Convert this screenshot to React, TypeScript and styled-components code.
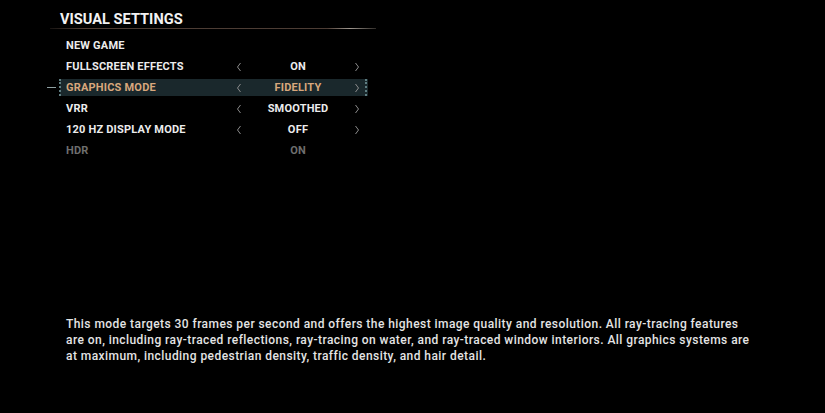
import React from "react";
import styled, { createGlobalStyle } from "styled-components";

const Global = createGlobalStyle`
  html, body { margin: 0; padding: 0; background: #000; }
  body { width: 825px; height: 413px; overflow: hidden; }
`;

const Screen = styled.div`
  width: 825px;
  height: 413px;
  background: #000;
  display: flex;
  flex-direction: column;
  justify-content: space-between;
  box-sizing: border-box;
  padding: 10px 0 49px 0;
`;

const Panel = styled.div`
  width: 326px;
  margin-left: 50px;
  display: flex;
  flex-direction: column;
`;

const Title = styled.h1`
  margin: 0 0 0 10px;
  font-family: Roboto, "Liberation Sans", sans-serif;
  font-weight: 700;
  font-size: 14.6px;
  line-height: 18px;
  color: #f2f2f2;
  letter-spacing: 0;
`;

const Divider = styled.div`
  height: 1px;
  background: linear-gradient(
    90deg,
    rgba(120, 100, 90, 0.2) 0%,
    rgba(140, 110, 95, 0.55) 10%,
    rgba(140, 110, 95, 0.55) 85%,
    rgba(200, 190, 180, 0.8) 92%,
    rgba(120, 110, 100, 0.4) 100%
  );
`;

const List = styled.div`
  display: flex;
  flex-direction: column;
  margin-top: 6px;
`;

const Row = styled.div<{ $active?: boolean }>`
  position: relative;
  display: grid;
  grid-template-columns: 170px 6px 112px 6px;
  align-items: center;
  height: 17px;
  margin: 2px 0 2px 10px;
  width: 308px;
  padding-left: 6px;
  box-sizing: border-box;
  background: ${(p) => (p.$active ? "#1a282c" : "transparent")};
  color: ${(p) => (p.$active ? "#d8a77c" : "#ececec")};
`;

const Label = styled.span<{ $dim?: boolean }>`
  font-family: Roboto, "Liberation Sans", sans-serif;
  font-weight: 700;
  font-size: 11px;
  letter-spacing: 0.2px;
  color: ${(p) => (p.$dim ? "#6e6e6e" : "inherit")};
  white-space: nowrap;
`;

const Value = styled.span<{ $dim?: boolean }>`
  font-family: Roboto, "Liberation Sans", sans-serif;
  font-weight: 700;
  font-size: 11px;
  letter-spacing: 0.2px;
  text-align: center;
  color: ${(p) => (p.$dim ? "#6e6e6e" : "inherit")};
`;

const Arrow = styled.span`
  display: flex;
  justify-content: center;
  align-items: center;
`;

const Bracket = styled.span<{ $side: "left" | "right" }>`
  position: absolute;
  top: 0;
  bottom: 0;
  ${(p) => (p.$side === "left" ? "left: -1px;" : "right: -1px;")}
  width: 2px;
  border-left: 2px dotted #5f7e82;
`;

const Tick = styled.span`
  position: absolute;
  left: -13px;
  top: 8px;
  width: 9px;
  height: 1px;
  background: #8fa0a2;
`;

const Description = styled.div`
  margin: 0 0 0 66px;
  display: flex;
  flex-direction: column;
  font-family: Roboto, "Liberation Sans", sans-serif;
  font-weight: 500;
  font-size: 12px;
  line-height: 16px;
  letter-spacing: 0.44px;
  color: #e4e4e4;
`;

const Line = styled.span`
  white-space: nowrap;
`;

const Chevron = ({ dir }: { dir: "left" | "right" }) => (
  <svg width="6" height="10" viewBox="0 0 6 10">
    <path
      d={dir === "left" ? "M4.5 1 L1.5 5 L4.5 9" : "M1.5 1 L4.5 5 L1.5 9"}
      fill="none"
      stroke="#8c8c8c"
      strokeWidth="1"
    />
  </svg>
);

type Setting = { label: string; value?: string; active?: boolean; disabled?: boolean };

const settings: Setting[] = [
  { label: "NEW GAME" },
  { label: "FULLSCREEN EFFECTS", value: "ON" },
  { label: "GRAPHICS MODE", value: "FIDELITY", active: true },
  { label: "VRR", value: "SMOOTHED" },
  { label: "120 HZ DISPLAY MODE", value: "OFF" },
  { label: "HDR", value: "ON", disabled: true },
];

const description = [
  "This mode targets 30 frames per second and offers the highest image quality and resolution. All ray-tracing features",
  "are on, including ray-traced reflections, ray-tracing on water, and ray-traced window interiors. All graphics systems are",
  "at maximum, including pedestrian density, traffic density, and hair detail.",
];

export default function App() {
  return (
    <>
      <Global />
      <Screen>
        <Panel>
          <Title>VISUAL SETTINGS</Title>
          <Divider />
          <List>
            {settings.map((s) => (
              <Row key={s.label} $active={s.active}>
                {s.active && (
                  <>
                    <Tick />
                    <Bracket $side="left" />
                    <Bracket $side="right" />
                  </>
                )}
                <Label $dim={s.disabled}>{s.label}</Label>
                <Arrow>{s.value && !s.disabled ? <Chevron dir="left" /> : null}</Arrow>
                <Value $dim={s.disabled}>{s.value ?? ""}</Value>
                <Arrow>{s.value && !s.disabled ? <Chevron dir="right" /> : null}</Arrow>
              </Row>
            ))}
          </List>
        </Panel>
        <Description>
          {description.map((l) => (
            <Line key={l}>{l}</Line>
          ))}
        </Description>
      </Screen>
    </>
  );
}
